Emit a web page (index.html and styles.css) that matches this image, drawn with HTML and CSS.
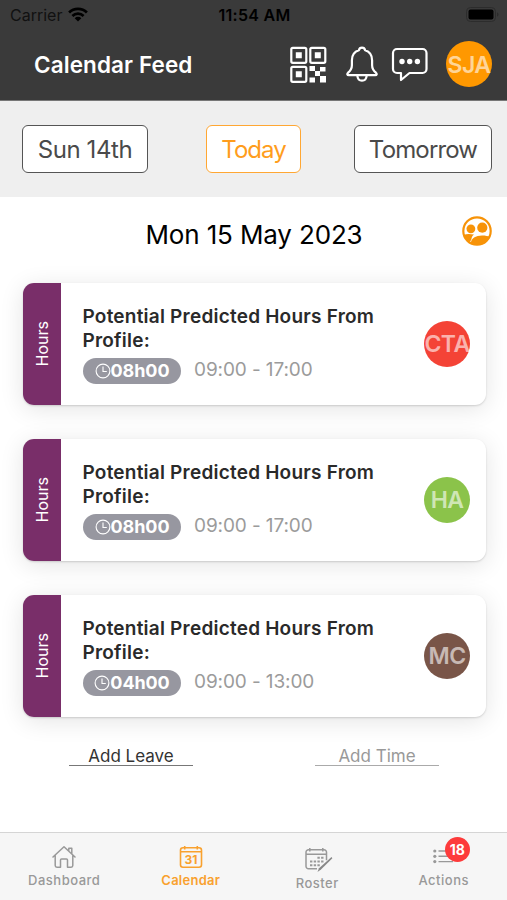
FILE: index.html
```html
<!DOCTYPE html>
<html lang="en">
<head>
<meta charset="utf-8">
<title>Calendar Feed</title>
<link rel="stylesheet" href="styles.css">
</head>
<body>
<header class="header">
  <div class="status">
    <div class="carrier"><span>Carrier</span>
      <svg width="20" height="15" viewBox="0 0 20 15"><g fill="none" stroke="#000" stroke-width="2.7"><path d="M1.1 5.5a12.6 12.6 0 0 1 17.8 0"/><path d="M4.4 9a8 8 0 0 1 11.2 0"/></g><path d="M10 14.5l-3.3-3.3a4.7 4.7 0 0 1 6.6 0z"/></svg>
    </div>
    <span class="clock">11:54 AM</span>
    <svg class="battery" width="33" height="15" viewBox="0 0 33 15"><rect x=".5" y=".5" width="29" height="14" rx="4" fill="none" stroke="#2c2c2c"/><rect x="2.5" y="2.5" width="25" height="10" rx="2"/><path d="M31 5.500c2 .5 2 3.500 0 4z" fill="#2c2c2c"/></svg>
  </div>
  <div class="titlebar">
    <h1>Calendar Feed</h1>
    <svg class="qr" width="37" height="37" viewBox="0 0 37 37"><g fill="none" stroke="#fff" stroke-width="2.200"><rect x="1.300" y="1.800" width="15" height="15" rx="1.500"/><rect x="20.300" y="1.800" width="15" height="15" rx="1.500"/><rect x="1.300" y="20.800" width="15" height="15" rx="1.500"/></g><path fill="#fff" d="M5.800 6.300h6v6h-6zM24.800 6.300h6v6h-6zM5.800 25.300h6v6h-6zM19.500 20h5.500v5h5v5h-5v-5h-5.500zM30 21h5.500v4.500H30zM19.500 31.500h5.500v5h-5.500zM30 30h6v6.500h-6z"/></svg>
    <svg class="bell" width="32" height="36" viewBox="0 0 32 36"><g fill="none" stroke="#fff" stroke-width="2.200" stroke-linejoin="round"><path d="M16 1.700c-1.700 0-2.800 1-3.100 2.500-4.500 1.400-7 5-7 10v5c0 3.500-1.500 5.500-3.800 7.500-1.300 1.300-.9 2.500.6 2.500h26.600c1.500 0 1.900-1.200.6-2.500-2.300-2-3.800-4-3.800-7.500v-5c0-5-2.500-8.600-7-10C18.800 2.700 17.700 1.700 16 1.700z"/><path d="M11.300 29.500c.3 3.500 2 5.200 4.700 5.200s4.400-1.700 4.700-5.200"/></g></svg>
    <svg class="chat" width="37" height="36" viewBox="0 0 37 36"><path d="M6 3h25.500a4 4 0 0 1 4 4v16a4 4 0 0 1-4 4H18.500L10 34V27H6a4 4 0 0 1-4-4V7a4 4 0 0 1 4-4z" fill="none" stroke="#fff" stroke-width="2.200" stroke-linejoin="round"/><g fill="#fff"><circle cx="11" cy="15.500" r="2.700"/><circle cx="18.700" cy="15.500" r="2.700"/><circle cx="26.400" cy="15.500" r="2.700"/></g></svg>
    <div class="avatar orange">SJA</div>
  </div>
</header>
<nav class="days">
  <button class="day sun">Sun 14th</button>
  <button class="day today">Today</button>
  <button class="day tomorrow">Tomorrow</button>
</nav>
<main>
  <div class="datebar">
    <h2>Mon 15 May 2023</h2>
    <svg width="30" height="30" viewBox="0 0 30 30"><circle cx="15" cy="15" r="13.700" fill="none" stroke="#f79308" stroke-width="2.200"/><g fill="#f79308"><circle cx="8.900" cy="12.800" r="4.400"/><circle cx="20.300" cy="11.700" r="5.100"/><path d="M2 18.700c2.500-.9 6-1 10-.1-1.900 1.500-2.300 2.900-2.600 4.600L8 26C4.500 24 2.500 21.500 2 18.700zM9 27.500c-.4-5 5-7.900 11-7.900 3.500 0 6.100.6 7.800 1.400C25.800 26 21 29 15 29c-2.200 0-4.200-.5-6-1.500z"/></g></svg>
  </div>
  <section class="cards">
    <article class="card">
      <div class="kind"><span>Hours</span></div>
      <div class="info"><h3>Potential Predicted Hours From Profile:</h3>
        <div class="times"><span class="pill"><svg width="16" height="16" viewBox="0 0 16 16"><g fill="none" stroke="#fff" stroke-width="1.100"><circle cx="8" cy="8" r="6.900"/><path d="M8 3.500V8.500h3.800"/></g></svg>08h00</span><span class="range">09:00 - 17:00</span></div></div>
      <div class="avatar red">CTA</div>
    </article>
    <article class="card">
      <div class="kind"><span>Hours</span></div>
      <div class="info"><h3>Potential Predicted Hours From Profile:</h3>
        <div class="times"><span class="pill"><svg width="16" height="16" viewBox="0 0 16 16"><g fill="none" stroke="#fff" stroke-width="1.100"><circle cx="8" cy="8" r="6.900"/><path d="M8 3.500V8.500h3.800"/></g></svg>08h00</span><span class="range">09:00 - 17:00</span></div></div>
      <div class="avatar green">HA</div>
    </article>
    <article class="card">
      <div class="kind"><span>Hours</span></div>
      <div class="info"><h3>Potential Predicted Hours From Profile:</h3>
        <div class="times"><span class="pill"><svg width="16" height="16" viewBox="0 0 16 16"><g fill="none" stroke="#fff" stroke-width="1.100"><circle cx="8" cy="8" r="6.900"/><path d="M8 3.500V8.500h3.800"/></g></svg>04h00</span><span class="range">09:00 - 13:00</span></div></div>
      <div class="avatar brown">MC</div>
    </article>
  </section>
  <div class="adds"><a class="add">Add Leave</a><a class="add muted">Add Time</a></div>
</main>
<footer class="tabs">
  <div class="tab">
    <svg width="24" height="24" viewBox="0 0 24 24"><g fill="none" stroke="#999" stroke-width="1.500" stroke-linejoin="round" stroke-linecap="round"><path d="M1 12L12 1.700 23 12M3.200 10.500V20.500q0 1.700 1.700 1.700H8.500V15q0-1 1-1h5q1 0 1 1v7.200h3.600q1.700 0 1.700-1.700V10.500M16.800 5.500V3.200h3v5.300"/></g></svg>
    <span>Dashboard</span>
  </div>
  <div class="tab active">
    <svg width="24" height="24" viewBox="0 0 24 24"><g fill="none" stroke="#f9a12e" stroke-width="1.600"><rect x="1.500" y="2.800" width="21" height="19.500" rx="2.500"/><path d="M2 6.800h20M5.700 1v3.500M18.300 1v3.500"/></g><text class="cal-num" x="12" y="19" text-anchor="middle">31</text></svg>
    <span>Calendar</span>
  </div>
  <div class="tab roster">
    <svg width="28" height="26" viewBox="0 0 28 26"><g fill="none" stroke="#999" stroke-width="1.500"><path d="M12 21.800H3.500A2.500 2.500 0 0 1 1 19.300v-14a2.500 2.500 0 0 1 2.500-2.500H19a2.500 2.500 0 0 1 2.500 2.500v8M1 7.200h20.500M4.800 1v3.600M17.800 1v3.600"/><path stroke-width="2" stroke-dasharray="2.400 1.300" d="M12.400 10.800h6.600M5 14.600h14M5 18.300h10"/></g><path d="M26.500 10l.9 1.200L16 22.500l-3.500 2.500 1.500-3.800z" fill="#888"/></svg>
    <span>Roster</span>
  </div>
  <div class="tab">
    <div class="iconbox"><svg width="24" height="24" viewBox="0 0 24 24"><g fill="#999"><circle cx="2.800" cy="6" r="1.600"/><circle cx="2.800" cy="11.300" r="1.600"/><circle cx="2.800" cy="16.600" r="1.600"/></g><path d="M6.500 6H21M6.500 11.300H21M6.500 16.600H21" stroke="#999" stroke-width="1.400"/></svg><b class="badge">18</b></div>
    <span>Actions</span>
  </div>
</footer>
</body>
</html>
```
FILE: styles.css
```css
* { box-sizing: border-box; }
body { margin: 0; width: 507px; height: 900px; display: flex; flex-direction: column; background: #fff; font-family: Inter, "Liberation Sans", sans-serif; overflow: hidden; }
svg { display: block; flex: none; }
h1, h2, h3 { margin: 0; }
.header { height: 101px; background: #3a3a3a; border-bottom: 1px solid #777; flex: none; }
.status { height: 29px; display: grid; grid-template-columns: 1fr auto 1fr; align-items: center; padding: 0 8px 0 10px; color: #000; }
.carrier { display: flex; align-items: center; gap: 6px; font-size: 16px; letter-spacing: 0; color: #111; }
.clock { font-size: 16px; font-weight: 600; letter-spacing: 0.3px; }
.battery { justify-self: end; }
.titlebar { display: flex; align-items: center; height: 70px; padding: 0 15px 0 34px; }
h1 { flex: 1; color: #fff; font-size: 22.500px; font-weight: 600; letter-spacing: .1px; line-height: 30px; padding-top: 1px; white-space: nowrap; }
.qr { margin-right: 19px; }
.bell { margin-right: 13px; }
.chat { margin-right: 18px; }
.avatar { width: 46px; height: 46px; border-radius: 50%; display: flex; align-items: center; justify-content: center; flex: none; font-size: 23px; font-weight: 600; letter-spacing: -.6px; padding-top: 1px; color: rgba(255,255,255,.6); }
.orange { background: #ff9800; }
.red { background: #f44336; }
.green { background: #8bc34a; }
.brown { background: #795548; }
.days { height: 96px; flex: none; background: #efefef; display: flex; padding: 24px 15px 0 22px; }
.day { height: 48px; padding: 0; border: 1.500px solid #555; border-radius: 6px; background: #fff; color: #4a4a4a; font: 400 24px/41px Inter, sans-serif; white-space: nowrap; }
.sun { width: 126px; letter-spacing: -.4px; }
.today { width: 95px; margin-left: 58px; color: #ff9d1c; border-color: #ffa733; letter-spacing: -1px; }
.tomorrow { width: 138px; margin-left: auto; letter-spacing: -.85px; }
main { flex: 1; }
.datebar { height: 85.500px; display: grid; grid-template-columns: 1fr auto 1fr; padding: 19px 15px 0 16px; }
.datebar h2 { grid-column: 2; font-size: 26px; line-height: 38px; font-weight: 400; letter-spacing: -.15px; color: #000; white-space: nowrap; }
.datebar svg { justify-self: end; }
.cards { display: grid; gap: 33.500px; padding: 0 21.500px 0 22.500px; }
.card { height: 122.500px; display: flex; align-items: center; border-radius: 11px; background: #fff; box-shadow: 0 1px 2px rgba(0,0,0,.15), 0 4px 25px rgba(0,0,0,.11); padding-right: 15.500px; }
.kind { align-self: stretch; width: 38.500px; border-radius: 11px 0 0 11px; background: #792e69; color: #fff; display: flex; align-items: center; justify-content: center; flex: none; }
.kind span { writing-mode: vertical-rl; transform: rotate(180deg); font-size: 16px; }
.info { flex: 1; align-self: stretch; padding: 22px 0 0 21.500px; }
h3 { font-size: 19px; line-height: 24.500px; font-weight: 600; letter-spacing: .22px; color: #2a2a2a; width: 310px; }
.times { display: flex; gap: 13.500px; align-items: flex-start; margin-top: 4px; }
.pill { width: 98px; height: 26px; border-radius: 13px; background: #9797a0; color: #fff; display: flex; align-items: center; justify-content: center; font-size: 18px; font-weight: 700; padding-left: 1px; letter-spacing: -.1px; }
.range { font-size: 19px; line-height: 24px; letter-spacing: -.1px; color: #9b9b9b; white-space: nowrap; }
.adds { display: flex; justify-content: space-between; padding: 0 68px 0 69px; margin-top: 27.500px; }
.add { width: 124px; height: 21px; text-align: center; font-size: 17px; line-height: 22px; color: #333; border-bottom: 1px solid #777; }
.muted { color: #999; border-color: #aaa; }
.tabs { height: 68px; flex: none; background: #f6f6f6; border-top: 1px solid #d5d5d5; display: grid; grid-template-columns: repeat(4, 1fr); padding-left: 1px; }
.tab { display: flex; flex-direction: column; align-items: center; padding-top: 12px; color: #999; font-size: 13px; font-weight: 500; letter-spacing: .5px; line-height: 16px; gap: 3px; }
.roster { padding-top: 14px; }
.roster svg { margin-bottom: -1px; transform: translateX(2px); }
.active { color: #f9a12e; font-weight: 600; letter-spacing: .25px; }
.cal-num { font-size: 12px; font-weight: 700; letter-spacing: 0; fill: #f9a12e; }
.iconbox { position: relative; }
.badge { position: absolute; left: 13px; top: -8px; width: 25px; height: 25px; border-radius: 50%; background: #fd3b3b; color: #fff; font-size: 14px; line-height: 25px; text-align: center; letter-spacing: 0; }
```
